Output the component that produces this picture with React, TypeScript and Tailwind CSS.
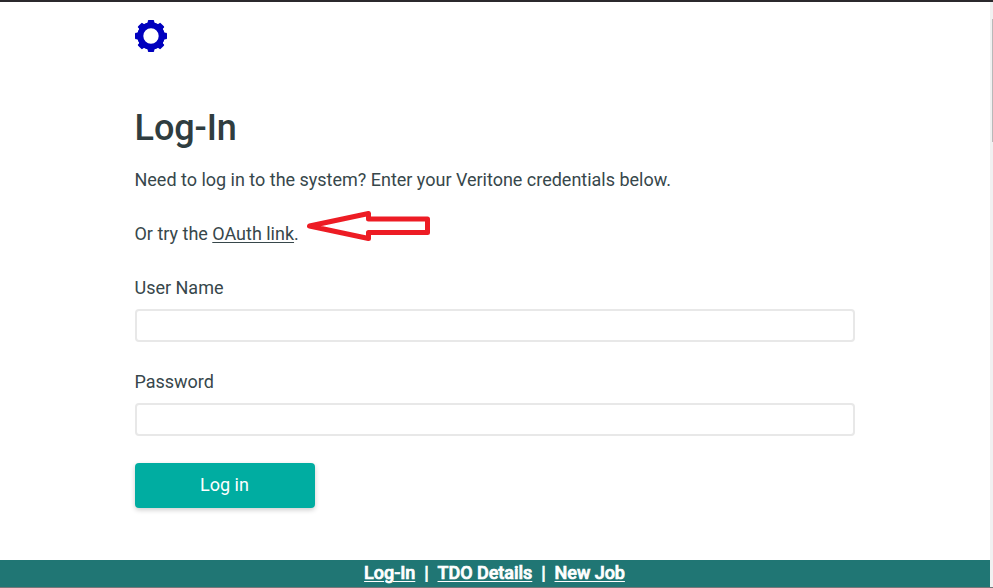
const teeth = [0, 45, 90, 135, 180, 225, 270, 315];

function GearLogo() {
  return (
    <svg className="block size-8" viewBox="0 0 32 32" aria-hidden="true">
      <g fill="#0000be">
        {teeth.map((angle) => (
          <path key={angle} d="M9.8 6 L11 3.5 Q12.6 3.2 12.8 2 V1 Q12.8 0 13.8 0 H18.2 Q19.2 0 19.2 1 V2 Q19.4 3.2 21 3.5 L22.2 6 Z" transform={`rotate(${angle} 16 16)`} />
        ))}
        <path fillRule="evenodd" d="M16 2.3a13.7 13.7 0 1 0 0 27.4a13.7 13.7 0 1 0 0-27.4Z M16 8.3a7.7 7.7 0 1 1 0 15.4a7.7 7.7 0 1 1 0-15.4Z" />
      </g>
    </svg>
  );
}

function Field({ label, type }: { label: string; type: string }) {
  return (
    <label className="mb-[26px] block">
      <span className="mb-2 -ml-[0.5px] block">{label}</span>
      <input type={type} className="block h-[33px] w-full rounded-[4px] border-2 border-[#e8e8e8] bg-white px-3 outline-none" />
    </label>
  );
}

export default function App() {
  return (
    <div className="flex h-[588px] w-[993px] flex-col overflow-hidden border-t-2 border-[#2b292d] bg-white font-[Roboto,sans-serif] text-[18px] leading-[27px] tracking-[-0.01px] text-[#37474b]">
      <div className="flex h-[585px]">
        <div className="flex w-[990px] flex-col">
          <main className="relative ml-[135px] h-[558px] w-[720px] pt-[18px]">
            <GearLogo />
            <h1 className="mt-[54px] -ml-[0.4px] text-[36px] leading-[44px] font-medium tracking-[-0.1px] text-[#2f3d40]">Log-In</h1>
            <p className="mt-4 -ml-[0.5px]">Need to log in to the system? Enter your Veritone credentials below.</p>
            <p className="mt-[27px] -ml-[0.5px]">
              Or try the <a href="#" className="underline decoration-1 underline-offset-2">OAuth link</a>.
            </p>
            <svg className="absolute top-[208px] left-[170px] h-[34px] w-[128px]" viewBox="0 0 128 34" aria-hidden="true">
              <path d="M4.5 16 L63.5 3.5 V9 H122.5 V22.5 H63.5 V28.5 Z" fill="none" stroke="#ed1c24" strokeWidth="5" strokeLinejoin="round" />
            </svg>
            <form className="mt-[27px]">
              <Field label="User Name" type="text" />
              <Field label="Password" type="password" />
              <button type="button" className="mt-[27px] block h-[45px] w-[180px] rounded-[4px] bg-[#00ada1] pr-px pb-[2px] text-white shadow-[0_2px_5px_rgba(0,0,0,0.2)]">
                Log in
              </button>
            </form>
          </main>
          <nav className="flex h-[27px] justify-center bg-[#207674] pr-px leading-[25px] font-medium tracking-[-0.03px] whitespace-pre text-white [-webkit-text-stroke:0.7px_white]">
            <a href="#" className="underline decoration-1 underline-offset-2">Log-In</a>
            <span>{"  |  "}</span>
            <a href="#" className="underline decoration-1 underline-offset-2">TDO Details</a>
            <span>{"  |  "}</span>
            <a href="#" className="underline decoration-1 underline-offset-2">New Job</a>
          </nav>
        </div>
        <div className="flex w-[3px] justify-end bg-[#f1f1f1] pt-[17px]">
          <div className="h-[123px] w-px bg-[#b9b9b9]" />
        </div>
      </div>
      <div className="h-px bg-[#77777a]" />
    </div>
  );
}
